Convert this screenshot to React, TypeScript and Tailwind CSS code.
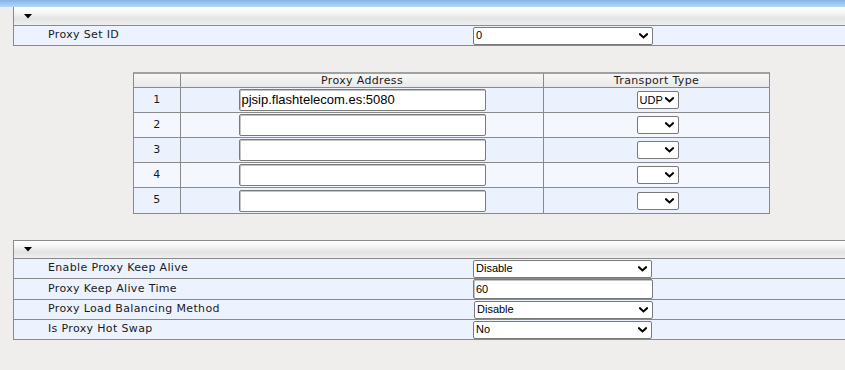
import React from "react";

const labelFont = { fontFamily: '"DejaVu Sans", Verdana, sans-serif', letterSpacing: "0.35px" };
const ctlFont = { fontFamily: '"Liberation Sans", Arial, sans-serif' };

function Chevron() {
  return (
    <svg width="9" height="6" viewBox="0 0 9 6" className="shrink-0">
      <path d="M1 1.2 L4.5 4.5 L8 1.2" fill="none" stroke="#000" strokeWidth="2" strokeLinecap="square" />
    </svg>
  );
}

function Select({ value, w, h = 18 }: { value: string; w: string; h?: number }) {
  return (
    <div
      className={`${w} flex items-center justify-between bg-white border border-[#7a7a7a] rounded-[2px] pl-[2px] pr-[4px] text-[11px] text-black leading-none`}
      style={{ ...ctlFont, height: h }}
    >
      <span>{value}</span>
      <Chevron />
    </div>
  );
}

function Triangle() {
  return (
    <svg width="8" height="5" viewBox="0 0 8 5">
      <path d="M0 0 L8 0 L4 4.5 Z" fill="#000" />
    </svg>
  );
}

function SectionHeader({ h, top }: { h: string; top?: boolean }) {
  return (
    <div
      className={`${h} flex items-center pl-[10px] border-b border-[#8a8a8a] ${top ? "border-t" : ""} bg-[linear-gradient(to_bottom,#ffffff_0%,#f6f6f6_30%,#e3e3e3_65%,#efefef_100%)]`}
    >
      <Triangle />
    </div>
  );
}

function Row({ label, children, h = "h-[20px]" }: { label: string; children: React.ReactNode; h?: string }) {
  return (
    <div className={`${h} flex items-center border-b border-[#8a8a8a] bg-[#edf3fe]`}>
      <div className="w-[459px] pl-[34px] text-[11px] text-[#1a1a1a]" style={labelFont}>
        {label}
      </div>
      {children}
    </div>
  );
}

const addrRows = [
  { n: "1", addr: "pjsip.flashtelecom.es:5080", t: "UDP", bg: "bg-[#ebf2fd]" },
  { n: "2", addr: "", t: "", bg: "bg-[#f5f7fe]" },
  { n: "3", addr: "", t: "", bg: "bg-[#ebf2fd]" },
  { n: "4", addr: "", t: "", bg: "bg-[#f5f7fe]" },
  { n: "5", addr: "", t: "", bg: "bg-[#ebf2fd]" },
];

export default function App() {
  return (
    <div className="w-[845px] h-[370px] bg-[#efeeec] overflow-hidden">
      <div className="h-[7px] bg-[linear-gradient(to_bottom,#84b4ea,#b8d6f5)]" />

      {/* Section 1 */}
      <div className="ml-[13px] border-l border-[#8a8a8a]">
        <SectionHeader h="h-[19px]" />
        <Row label="Proxy Set ID">
          <Select value="0" w="w-[180px]" />
        </Row>
      </div>

      {/* Proxy address table */}
      <div className="ml-[133px] mt-[26px] w-[637px] border-x border-b border-t-2 border-[#8a8a8a] border-t-[#a0a0a0]">
        <div
          className="h-[14px] flex border-b border-[#8a8a8a] bg-[linear-gradient(to_bottom,#f7f7f7,#e9e9e9)] text-[11px] text-[#1a1a1a] leading-[13px]"
          style={labelFont}
        >
          <div className="w-[47px] border-r border-[#8a8a8a]" />
          <div className="w-[363px] border-r border-[#8a8a8a] text-center">Proxy Address</div>
          <div className="flex-1 text-center">Transport Type</div>
        </div>
        {addrRows.map((r, i) => (
          <div
            key={r.n}
            className={`h-[25px] flex ${i < addrRows.length - 1 ? "border-b" : ""} border-[#8a8a8a] ${r.bg}`}
          >
            <div
              className="w-[47px] border-r border-[#8a8a8a] flex items-center justify-center text-[11px] text-[#1a1a1a]"
              style={labelFont}
            >
              {r.n}
            </div>
            <div className="w-[363px] border-r border-[#8a8a8a] flex items-center justify-center">
              <div
                className="w-[247px] h-[22px] bg-white border border-[#7a7a7a] rounded-[2px] shadow-[inset_1px_1px_0_#c4c4c4] flex items-center pl-[2px] text-[13px] text-black"
                style={ctlFont}
              >
                {r.addr}
              </div>
            </div>
            <div className="flex-1 flex items-center justify-center pl-[2px]">
              <Select value={r.t} w="w-[42px]" />
            </div>
          </div>
        ))}
      </div>

      {/* Section 2 */}
      <div className="ml-[13px] mt-[26px] border-l border-[#8a8a8a]">
        <SectionHeader h="h-[19px]" top />
        <Row label="Enable Proxy Keep Alive">
          <Select value="Disable" w="w-[179px]" />
        </Row>
        <Row label="Proxy Keep Alive Time" h="h-[21px]">
          <div
            className="w-[180px] h-[20px] bg-white border border-[#7a7a7a] rounded-[2px] shadow-[inset_1px_1px_0_#c4c4c4] flex items-center pl-[2px] text-[11px] text-black"
            style={ctlFont}
          >
            60
          </div>
        </Row>
        <Row label="Proxy Load Balancing Method">
          <div className="pl-[1px]">
            <Select value="Disable" w="w-[179px]" />
          </div>
        </Row>
        <Row label="Is Proxy Hot Swap">
          <Select value="No" w="w-[179px]" />
        </Row>
      </div>
    </div>
  );
}
